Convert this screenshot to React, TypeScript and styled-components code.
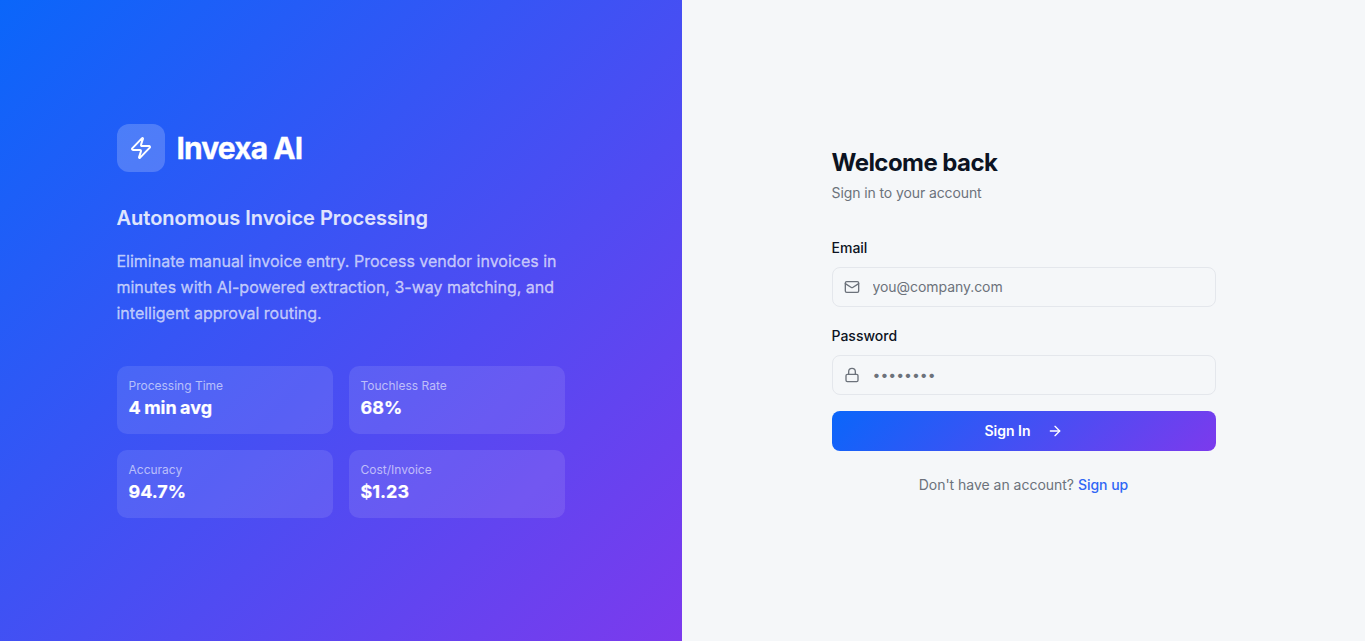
import React from 'react';
import styled, { createGlobalStyle } from 'styled-components';
import { ArrowRight, Lock, Mail, Zap } from 'lucide-react';

const GlobalStyle = createGlobalStyle`
  *,
  *::before,
  *::after {
    box-sizing: border-box;
  }
  body {
    margin: 0;
    font-family: Inter, 'Liberation Sans', sans-serif;
    font-size: 16px;
    line-height: 24px;
    color: #0c1322;
    background: #f5f7f9;
  }
  h1,
  h2,
  p {
    margin: 0;
  }
  input,
  button {
    font-family: inherit;
  }
`;

const Page = styled.main`
  display: flex;
  min-height: 100vh;
`;

const BrandPanel = styled.section`
  width: 682px;
  display: flex;
  align-items: center;
  justify-content: center;
  padding: 48px 49px 48px 48px;
  color: #fff;
  background: linear-gradient(135deg, #0a66fa 0%, #7c3aed 100%);
`;

const BrandContent = styled.div`
  width: 448px;
`;

const Brand = styled.div`
  display: flex;
  align-items: center;
  gap: 12px;
  margin-bottom: 32px;
  h1 {
    font-size: 30px;
    line-height: 36px;
    font-weight: 700;
    letter-spacing: -0.9px;
    -webkit-text-stroke: 0.3px #fff;
  }
`;

const LogoBox = styled.div`
  display: flex;
  align-items: center;
  justify-content: center;
  width: 48px;
  height: 48px;
  border-radius: 12px;
  background: rgba(255, 255, 255, 0.2);
`;

const Tagline = styled.p`
  margin-bottom: 16px;
  font-size: 20px;
  line-height: 28px;
  font-weight: 600;
  color: rgba(255, 255, 255, 0.85);
  -webkit-text-stroke: 0.2px rgba(255, 255, 255, 0.5);
`;

const Description = styled.p`
  line-height: 26px;
  letter-spacing: -0.01px;
  color: rgba(255, 255, 255, 0.65);
  -webkit-text-stroke: 0.35px rgba(255, 255, 255, 0.5);
`;

const Stats = styled.div`
  display: grid;
  grid-template-columns: 1fr 1fr;
  gap: 16px;
  margin-top: 40px;
`;

const StatCard = styled.div`
  padding: 12px;
  border-radius: 10px;
  background: rgba(255, 255, 255, 0.1);
  span {
    display: block;
    font-size: 12px;
    line-height: 16px;
    color: rgba(255, 255, 255, 0.6);
  }
  strong {
    display: block;
    font-size: 18px;
    line-height: 28px;
    font-weight: 700;
    word-spacing: -0.8px;
    -webkit-text-stroke: 0.2px #fff;
  }
`;

const FormPanel = styled.section`
  flex: 1;
  display: flex;
  align-items: center;
  justify-content: center;
`;

const Form = styled.form`
  width: 384px;
`;

const Heading = styled.header`
  margin-bottom: 32px;
  h2 {
    font-size: 24px;
    line-height: 32px;
    font-weight: 700;
    letter-spacing: -0.56px;
  }
  p {
    margin-top: 4px;
    font-size: 14px;
    line-height: 20px;
    letter-spacing: -0.1px;
    color: #6c727b;
  }
`;

const Field = styled.div`
  margin-bottom: 16px;
  label {
    display: block;
    padding-top: 1px;
    margin-bottom: 7px;
    font-size: 14px;
    line-height: 24px;
    font-weight: 500;
  }
`;

const InputBox = styled.div`
  display: flex;
  align-items: center;
  gap: 13px;
  height: 40px;
  padding: 0 12px 0 11px;
  border: 1px solid #e4e7ec;
  border-radius: 8px;
  color: #6c727b;
  input {
    flex: 1;
    min-width: 0;
    padding: 0;
    border: 0;
    outline: none;
    background: transparent;
    font-size: 14px;
    line-height: 20px;
  }
  input::placeholder {
    color: #6c727b;
  }
  input[type='email'] {
    letter-spacing: -0.06px;
  }
`;

const SubmitButton = styled.button`
  display: flex;
  align-items: center;
  justify-content: center;
  gap: 16px;
  width: 100%;
  height: 40px;
  padding: 0;
  border: 0;
  border-radius: 8px;
  font-size: 14px;
  line-height: 20px;
  font-weight: 600;
  color: #fff;
  background: linear-gradient(135deg, #0a66fa 0%, #7c3aed 100%);
`;

const SignUp = styled.p`
  margin-top: 24px;
  font-size: 14px;
  line-height: 20px;
  letter-spacing: -0.02px;
  text-align: center;
  color: #6c727b;
  a {
    font-weight: 500;
    color: #2f66f5;
    text-decoration: none;
  }
`;

const stats = [
  { label: 'Processing Time', value: '4 min avg' },
  { label: 'Touchless Rate', value: '68%' },
  { label: 'Accuracy', value: '94.7%' },
  { label: 'Cost/Invoice', value: '$1.23' },
];

const App = () => {
  return (
    <>
      <GlobalStyle />
      <Page>
        <BrandPanel>
          <BrandContent>
            <Brand>
              <LogoBox>
                <Zap size={24} />
              </LogoBox>
              <h1>Invexa AI</h1>
            </Brand>
            <Tagline>Autonomous Invoice Processing</Tagline>
            <Description>
              Eliminate manual invoice entry. Process vendor invoices in minutes
              with AI-powered extraction, 3-way matching, and intelligent
              approval routing.
            </Description>
            <Stats>
              {stats.map((stat) => (
                <StatCard key={stat.label}>
                  <span>{stat.label}</span>
                  <strong>{stat.value}</strong>
                </StatCard>
              ))}
            </Stats>
          </BrandContent>
        </BrandPanel>
        <FormPanel>
          <Form onSubmit={(e) => e.preventDefault()}>
            <Heading>
              <h2>Welcome back</h2>
              <p>Sign in to your account</p>
            </Heading>
            <Field>
              <label htmlFor="email">Email</label>
              <InputBox>
                <Mail size={16} />
                <input id="email" type="email" placeholder="you@company.com" />
              </InputBox>
            </Field>
            <Field>
              <label htmlFor="password">Password</label>
              <InputBox>
                <Lock size={16} />
                <input id="password" type="password" placeholder="••••••••" />
              </InputBox>
            </Field>
            <SubmitButton type="submit">
              Sign In
              <ArrowRight size={16} />
            </SubmitButton>
            <SignUp>
              Don't have an account? <a href="#signup">Sign up</a>
            </SignUp>
          </Form>
        </FormPanel>
      </Page>
    </>
  );
};

export default App;
